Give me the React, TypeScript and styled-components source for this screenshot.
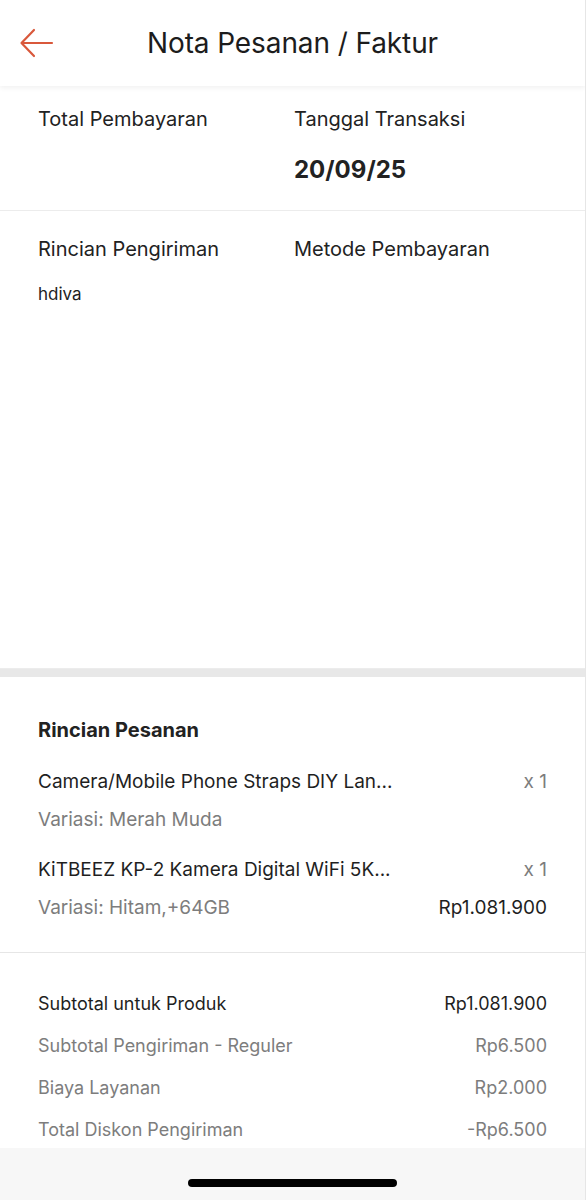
import React from 'react';
import styled, { createGlobalStyle } from 'styled-components';

const GlobalStyle = createGlobalStyle`
  * {
    box-sizing: border-box;
  }
  body {
    margin: 0;
    background: #ffffff;
    font-family: Inter, "Noto Sans", "Liberation Sans", sans-serif;
    color: #222222;
  }
`;

const Page = styled.div`
  width: 586px;
  height: 1200px;
  border-right: 1px solid #e6e6e6;
  display: flex;
  flex-direction: column;
  overflow: hidden;
  background: #fff;
`;

const Header = styled.header`
  height: 86px;
  flex-shrink: 0;
  display: grid;
  grid-template-columns: 1fr auto 1fr;
  align-items: center;
  background: #fff;
  box-shadow: 0 2px 5px rgba(0, 0, 0, 0.06);
  position: relative;
  z-index: 1;
`;

const BackButton = styled.button`
  justify-self: start;
  margin-left: 19px;
  padding: 0;
  border: none;
  background: none;
  display: flex;
  cursor: pointer;
`;

const Title = styled.h1`
  margin: 0;
  font-size: 28px;
  font-weight: 400;
  color: #1c1c1c;
  letter-spacing: -0.1px;
`;

const Scroll = styled.main`
  flex: 1;
  overflow: hidden;
`;

const InfoGrid = styled.section<{ $top: number; $bottom: number; $height?: number }>`
  display: grid;
  grid-template-columns: 256px 1fr;
  padding: ${(p) => p.$top}px 38px ${(p) => p.$bottom}px;
  height: ${(p) => (p.$height ? `${p.$height}px` : 'auto')};
  border-bottom: 1px solid #ececec;
`;

const InfoCol = styled.div<{ $gap: number }>`
  display: flex;
  flex-direction: column;
  gap: ${(p) => p.$gap}px;
`;

const Label = styled.div`
  font-size: 20px;
  line-height: 24px;
  color: #222;
`;

const DateValue = styled.div`
  font-size: 24px;
  line-height: 30px;
  font-weight: 700;
  color: #222;
`;

const SmallText = styled.div`
  font-size: 17px;
  line-height: 22px;
  color: #222;
`;

const Band = styled.div`
  height: 8px;
  flex-shrink: 0;
  background: #e8e8e8;
`;

const OrderSection = styled.section`
  padding: 41px 38px 32px;
  border-bottom: 1px solid #e6e6e6;
`;

const SectionTitle = styled.h2`
  margin: 0 0 28px;
  font-size: 20px;
  line-height: 24px;
  font-weight: 700;
  color: #222;
`;

const ItemList = styled.div`
  display: flex;
  flex-direction: column;
  gap: 26px;
`;

const Item = styled.div`
  display: flex;
  flex-direction: column;
  gap: 14px;
`;

const Row = styled.div`
  display: flex;
  justify-content: space-between;
  align-items: baseline;
  gap: 16px;
`;

const Text = styled.span<{ $muted?: boolean; $size?: number }>`
  font-size: ${(p) => p.$size ?? 18}px;
  line-height: 24px;
  color: ${(p) => (p.$muted ? '#7d7d7d' : '#1f1f1f')};
  white-space: nowrap;
`;

const SummarySection = styled.section`
  padding: 39px 38px 0;
  display: flex;
  flex-direction: column;
  gap: 18px;
`;

const HomeBar = styled.div`
  height: 52px;
  flex-shrink: 0;
  background: #f7f7f7;
  display: flex;
  justify-content: center;
  padding-top: 31px;
`;

const HomeIndicator = styled.div`
  width: 209px;
  height: 8px;
  border-radius: 4px;
  background: #000;
`;

const items = [
  { name: 'Camera/Mobile Phone Straps DIY Lan...', qty: 'x 1', variant: 'Variasi: Merah Muda', price: '' },
  { name: 'KiTBEEZ KP-2 Kamera Digital WiFi 5K...', qty: 'x 1', variant: 'Variasi: Hitam,+64GB', price: 'Rp1.081.900' },
];

const summary = [
  { label: 'Subtotal untuk Produk', value: 'Rp1.081.900', muted: false },
  { label: 'Subtotal Pengiriman - Reguler', value: 'Rp6.500', muted: true },
  { label: 'Biaya Layanan', value: 'Rp2.000', muted: true },
  { label: 'Total Diskon Pengiriman', value: '-Rp6.500', muted: true },
];

function BackArrow() {
  return (
    <svg width="36" height="30" viewBox="0 0 36 30" fill="none">
      <path
        d="M33 15H3M15 2L2.5 15L15 28"
        stroke="#d9583b"
        strokeWidth="2.2"
        strokeLinecap="round"
        strokeLinejoin="round"
      />
    </svg>
  );
}

export default function App() {
  return (
    <>
      <GlobalStyle />
      <Page>
        <Header>
          <BackButton aria-label="Kembali">
            <BackArrow />
          </BackButton>
          <Title>Nota Pesanan / Faktur</Title>
          <span />
        </Header>
        <Scroll>
          <InfoGrid $top={21} $bottom={25}>
            <InfoCol $gap={24}>
              <Label>Total Pembayaran</Label>
            </InfoCol>
            <InfoCol $gap={24}>
              <Label>Tanggal Transaksi</Label>
              <DateValue>20/09/25</DateValue>
            </InfoCol>
          </InfoGrid>
          <InfoGrid $top={26} $bottom={0} $height={458}>
            <InfoCol $gap={22}>
              <Label>Rincian Pengiriman</Label>
              <SmallText>hdiva</SmallText>
            </InfoCol>
            <InfoCol $gap={22}>
              <Label>Metode Pembayaran</Label>
            </InfoCol>
          </InfoGrid>
          <Band />
          <OrderSection>
            <SectionTitle>Rincian Pesanan</SectionTitle>
            <ItemList>
              {items.map((it) => (
                <Item key={it.name}>
                  <Row>
                    <Text $size={19}>{it.name}</Text>
                    <Text $size={19} $muted>{it.qty}</Text>
                  </Row>
                  <Row>
                    <Text $size={19} $muted>{it.variant}</Text>
                    {it.price && <Text $size={19}>{it.price}</Text>}
                  </Row>
                </Item>
              ))}
            </ItemList>
          </OrderSection>
          <SummarySection>
            {summary.map((s) => (
              <Row key={s.label}>
                <Text $muted={s.muted}>{s.label}</Text>
                <Text $muted={s.muted}>{s.value}</Text>
              </Row>
            ))}
          </SummarySection>
        </Scroll>
        <HomeBar>
          <HomeIndicator />
        </HomeBar>
      </Page>
    </>
  );
}
